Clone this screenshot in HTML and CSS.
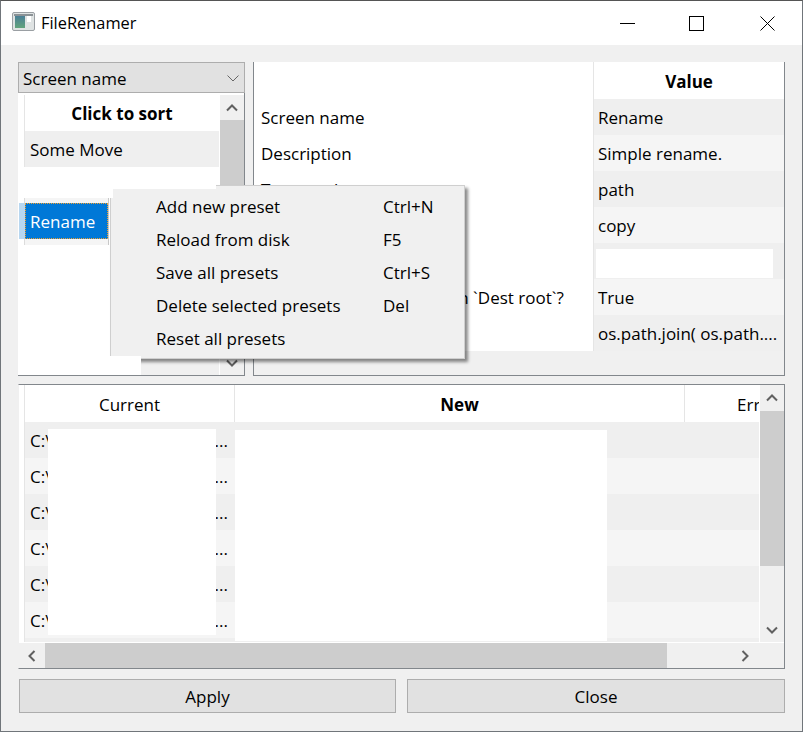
FILE: index.html
```html
<!DOCTYPE html>
<html lang="en">
<head>
  <meta charset="UTF-8" />
  <meta name="viewport" content="width=device-width, initial-scale=1" />
  <title>FileRenamer</title>
  <link rel="stylesheet" href="styles.css">
</head>
<body>
  <div class="window">
    <div class="titlebar">
      <svg class="app-icon" width="24" height="20" viewBox="0 0 24 20">
        <defs>
          <linearGradient id="icon-fill" x1="0" y1="0" x2="0" y2="1">
            <stop offset="0" stop-color="#4a7f96"/>
            <stop offset="1" stop-color="#62a47c"/>
          </linearGradient>
        </defs>
        <rect x="0.5" y="0.5" width="22" height="18" rx="1.5" fill="#dfe3e3" stroke="#9a9fa3"/>
        <rect x="2" y="2" width="19" height="2" fill="#8b9296"/>
        <rect x="3" y="4" width="10" height="12" fill="url(#icon-fill)"/>
        <rect x="15" y="4" width="4" height="6" fill="#fff"/>
      </svg>
      <span class="title">FileRenamer</span>
      <div class="win-buttons">
        <svg width="15" height="15" viewBox="0 0 15 15"><path d="M0 7.5h15" stroke="#000" fill="none"/></svg>
        <svg width="15" height="15" viewBox="0 0 15 15"><rect x="0.5" y="0.5" width="14" height="14" stroke="#000" fill="none"/></svg>
        <svg class="win-close" width="15" height="15" viewBox="0 0 15 15"><path d="M0.5 0.5l14 14M14.5 0.5l-14 14" stroke="#000" fill="none"/></svg>
      </div>
    </div>

    <div class="content">
      <div class="top-row">
        <div class="left-col">
          <div class="combo">
            <span>Screen name</span>
            <svg width="12" height="7" viewBox="0 0 12 7"><path d="M0.5 0.5l5.5 5.5l5.5-5.5" stroke="#666" fill="none"/></svg>
          </div>
          <div class="preset-frame">
            <div class="preset-list">
              <div class="head bold lined">Click to sort</div>
              <div class="cell even lined">Some Move</div>
              <div class="blank"></div>
              <div class="sel-row"><div class="selected">Rename</div></div>
              <div class="list-fill"></div>
              <div class="list-foot"></div>
            </div>
            <div class="vscroll">
              <div class="arrow"><svg width="12" height="8" viewBox="0 0 12 8"><path d="M1 6.5l5-5l5 5" stroke="#606060" stroke-width="2" fill="none"/></svg></div>
              <div class="thumb list-thumb"></div>
              <div class="arrow"><svg width="12" height="8" viewBox="0 0 12 8"><path d="M1 1.5l5 5l5-5" stroke="#606060" stroke-width="2" fill="none"/></svg></div>
            </div>
          </div>
        </div>

        <div class="props-frame">
          <div class="props-names">
            <div class="head"></div>
            <div class="cell">Screen name</div>
            <div class="cell">Description</div>
            <div class="cell">Target value</div>
            <div class="cell"></div>
            <div class="cell"></div>
            <div class="cell">Is the destination folder in `Dest root`?</div>
            <div class="cell"></div>
          </div>
          <div class="props-values">
            <div class="head bold">Value</div>
            <div class="cell even">Rename</div>
            <div class="cell odd">Simple rename.</div>
            <div class="cell even">path</div>
            <div class="cell odd">copy</div>
            <div class="cell even"><div class="blank-edit"></div></div>
            <div class="cell odd">True</div>
            <div class="cell even">os.path.join( os.path....</div>
          </div>
        </div>
      </div>

      <div class="table-frame">
        <div class="table-main">
          <div class="table-body">
            <div class="table-head">
              <div class="col-current">Current</div>
              <div class="col-new bold">New</div>
              <div class="col-err">Err</div>
            </div>
            <div class="file-row even"><div class="col-current">C:\<span>...</span></div></div>
            <div class="file-row odd"><div class="col-current">C:\<span>...</span></div></div>
            <div class="file-row even"><div class="col-current">C:\<span>...</span></div></div>
            <div class="file-row odd"><div class="col-current">C:\<span>...</span></div></div>
            <div class="file-row even"><div class="col-current">C:\<span>...</span></div></div>
            <div class="file-row odd"><div class="col-current">C:\<span>...</span></div></div>
            <div class="file-row even"></div>
          </div>
          <div class="hide hide-current"></div>
          <div class="hide hide-new"></div>
          <div class="vscroll">
            <div class="arrow arrow-tall"><svg width="12" height="8" viewBox="0 0 12 8"><path d="M1 6.5l5-5l5 5" stroke="#606060" stroke-width="2" fill="none"/></svg></div>
            <div class="track"><div class="thumb table-thumb"></div></div>
            <div class="arrow"><svg width="12" height="8" viewBox="0 0 12 8"><path d="M1 1.5l5 5l5-5" stroke="#606060" stroke-width="2" fill="none"/></svg></div>
          </div>
        </div>
        <div class="hscroll">
          <div class="harrow"><svg width="8" height="12" viewBox="0 0 8 12"><path d="M6.5 1l-5 5l5 5" stroke="#606060" stroke-width="2" fill="none"/></svg></div>
          <div class="hthumb"></div>
          <div class="harrow harrow-right"><svg width="8" height="12" viewBox="0 0 8 12"><path d="M1.5 1l5 5l-5 5" stroke="#606060" stroke-width="2" fill="none"/></svg></div>
        </div>
      </div>

      <div class="buttons">
        <div class="btn btn-apply">Apply</div>
        <div class="btn">Close</div>
      </div>
    </div>

    <div class="menu">
      <div class="menu-item"><span>Add new preset</span><span>Ctrl+N</span></div>
      <div class="menu-item"><span>Reload from disk</span><span>F5</span></div>
      <div class="menu-item"><span>Save all presets</span><span>Ctrl+S</span></div>
      <div class="menu-item"><span>Delete selected presets</span><span>Del</span></div>
      <div class="menu-item"><span>Reset all presets</span></div>
    </div>

    <!-- white blocks painted over the screenshot -->
    <div class="patch patch-list"></div>
    <div class="patch patch-corner"></div>
    <div class="patch patch-foot"></div>
  </div>
</body>
</html>
```

FILE: styles.css
```css
* {
  box-sizing: border-box;
}

html, body {
  margin: 0;
  padding: 0;
}

body {
  font-family: 'Open Sans', 'Noto Sans', sans-serif;
  font-size: 17px;
  color: #000;
  background: #f0f0f0;
  overflow: hidden;
}

.window {
  position: relative;
  width: 803px;
  height: 732px;
  border: 1px solid #70757a;
  border-top-color: #555;
  background: #f0f0f0;
  display: flex;
  flex-direction: column;
}

.bold {
  font-weight: 700;
}

/* title bar */
.titlebar {
  height: 44px;
  background: #fff;
  display: flex;
  align-items: center;
  padding-left: 11px;
  flex-shrink: 0;
}

.app-icon {
  margin: -2px 5px 0 0;
}

.title {
  font-size: 16.4px;
  margin-bottom: 2px;
}

.win-buttons {
  margin-left: auto;
  display: flex;
  gap: 54px;
  padding-right: 27px;
}

.win-close {
  margin-left: 2px;
}

/* main area */
.content {
  flex: 1;
  padding: 17px 17px 0 17px;
  display: flex;
  flex-direction: column;
}

.top-row {
  display: flex;
  gap: 8px;
  height: 314px;
}

.left-col {
  width: 227px;
  display: flex;
  flex-direction: column;
}

.combo {
  height: 31px;
  background: #e1e1e1;
  border: 1px solid #adadad;
  display: flex;
  align-items: center;
  justify-content: space-between;
  padding: 1px 5px 0 4px;
  flex-shrink: 0;
}

.preset-frame {
  flex: 1;
  display: flex;
  min-height: 0;
  border-right: 1px solid #82878c;
  border-bottom: 1px solid #82878c;
  padding: 2px 0 0 6px;
  background: #fff;
}

.preset-list {
  width: 196px;
  display: flex;
  flex-direction: column;
}

.head {
  height: 37px;
  background: #fff;
  display: flex;
  align-items: center;
  justify-content: center;
  padding-top: 1px;
}

.preset-list .head {
  height: 36px;
  margin-right: 1px;
}

.cell {
  height: 36px;
  display: flex;
  align-items: center;
  padding: 1px 0 0 5px;
  white-space: nowrap;
}

.preset-list .cell {
  margin-right: 1px;
}

.lined {
  border-left: 1px solid #e5e5e5;
}

.preset-list .head.lined {
  padding-left: 0;
}

.even {
  background: #efefef;
}

.odd {
  background: #f5f5f5;
}

.blank {
  height: 31px;
  background: #fff;
}

.sel-row {
  width: 85px;
  height: 47px;
  padding-top: 5px;
  background: #f5f5f5;
  border-left: 1px solid #dcdcdc;
  border-right: 1px solid #c8c8c8;
}

.selected {
  height: 36px;
  display: flex;
  align-items: center;
  padding: 1px 0 0 5px;
  background: #0078d7;
  color: #fff;
  outline: 1px dotted #f0a030;
  outline-offset: -1px;
  box-shadow: -6px 0 0 #b8d7f0;
}

.list-fill {
  flex: 1;
}

.list-foot {
  height: 16px;
  margin-left: 117px;
  margin-right: 1px;
  background: #f0f0f0;
}

.vscroll {
  width: 24px;
  margin-left: auto;
  background: #f0f0f0;
  display: flex;
  flex-direction: column;
  flex-shrink: 0;
}

.arrow {
  height: 25px;
  display: flex;
  align-items: center;
  justify-content: center;
  flex-shrink: 0;
}

.arrow-tall {
  height: 26px;
}

.thumb {
  background: #cdcdcd;
}

.list-thumb {
  flex: 1;
}

/* properties */
.props-frame {
  flex: 1;
  display: flex;
  border-left: 1px solid #82878c;
  border-right: 1px solid #82878c;
  border-bottom: 1px solid #82878c;
  background: #f0f0f0;
  align-items: flex-start;
}

.props-names {
  width: 340px;
  height: 289px;
  background: #fff;
  border-right: 1px solid #e5e5e5;
}

.props-names .cell {
  padding-left: 7px;
}

.props-values {
  flex: 1;
  min-width: 0;
}

.props-values .cell {
  padding-left: 4px;
  overflow: hidden;
}

.blank-edit {
  background: #fff;
  width: 177px;
  height: 29px;
  margin: 3px 0 0 -2px;
}

/* bottom table */
.table-frame {
  margin-top: 8px;
  height: 285px;
  border: 1px solid #82878c;
  border-left-color: #f0f0f0;
  display: flex;
  flex-direction: column;
}

.table-main {
  position: relative;
  flex: 1;
  display: flex;
  padding-left: 5px;
  min-height: 0;
  background: #fff;
}

.table-body {
  width: 735px;
  overflow: hidden;
  border-left: 1px solid #e5e5e5;
}

.table-head {
  display: flex;
  height: 37px;
  background: #fff;
}

.table-head div {
  display: flex;
  align-items: center;
  justify-content: center;
  height: 100%;
  flex-shrink: 0;
  padding-top: 1px;
}

.col-current {
  width: 210px;
  border-right: 1px solid #e5e5e5;
}

.col-new {
  width: 450px;
  border-right: 1px solid #e5e5e5;
}

.table-head .col-err {
  width: 75px;
  justify-content: flex-start;
  padding-left: 52px;
  white-space: nowrap;
}

.file-row {
  height: 36px;
  white-space: nowrap;
}

.file-row .col-current {
  height: 100%;
  display: flex;
  align-items: center;
  justify-content: space-between;
  padding: 1px 7px 0 5px;
  border-right: none;
}

.hide {
  position: absolute;
  background: #fff;
}

.hide-current {
  left: 29px;
  top: 44px;
  width: 168px;
  height: 206px;
}

.hide-new {
  left: 216px;
  top: 45px;
  width: 372px;
  height: 211px;
}

.track {
  flex: 1;
}

.table-thumb {
  height: 155px;
}

.hscroll {
  height: 26px;
  display: flex;
  background: #f0f0f0;
  border-top: 1px solid #fff;
  flex-shrink: 0;
  padding-right: 25px;
}

.harrow {
  width: 26px;
  display: flex;
  align-items: center;
  justify-content: center;
  flex-shrink: 0;
}

.harrow-right {
  width: 28px;
  margin-left: auto;
}

.hthumb {
  width: 622px;
  background: #cdcdcd;
}

.buttons {
  display: flex;
  gap: 11px;
  margin-top: 10px;
  padding-left: 1px;
}

.btn {
  flex: 1;
  height: 34px;
  background: #e1e1e1;
  border: 1px solid #adadad;
  display: flex;
  align-items: center;
  justify-content: center;
}

.btn-apply {
  flex: none;
  width: 377px;
}

/* context menu */
.menu {
  position: absolute;
  left: 109px;
  top: 184px;
  width: 355px;
  height: 174px;
  background: #f0f0f0;
  border: 1px solid #cfcfcf;
  box-shadow: 3px 3px 3px rgba(0, 0, 0, 0.45);
  padding-top: 4px;
}

.menu-item {
  height: 33px;
  display: flex;
  align-items: center;
  padding-left: 45px;
}

.menu-item span:first-child {
  width: 227px;
  white-space: nowrap;
}

/* white blocks over the menu edges */
.patch {
  position: absolute;
  background: #fff;
}

.patch-list {
  left: 24px;
  top: 167px;
  width: 191px;
  height: 21px;
}

.patch-corner {
  left: 105px;
  top: 188px;
  width: 7px;
  height: 9px;
}

.patch-foot {
  left: 17px;
  top: 355px;
  width: 123px;
  height: 19px;
}
```
